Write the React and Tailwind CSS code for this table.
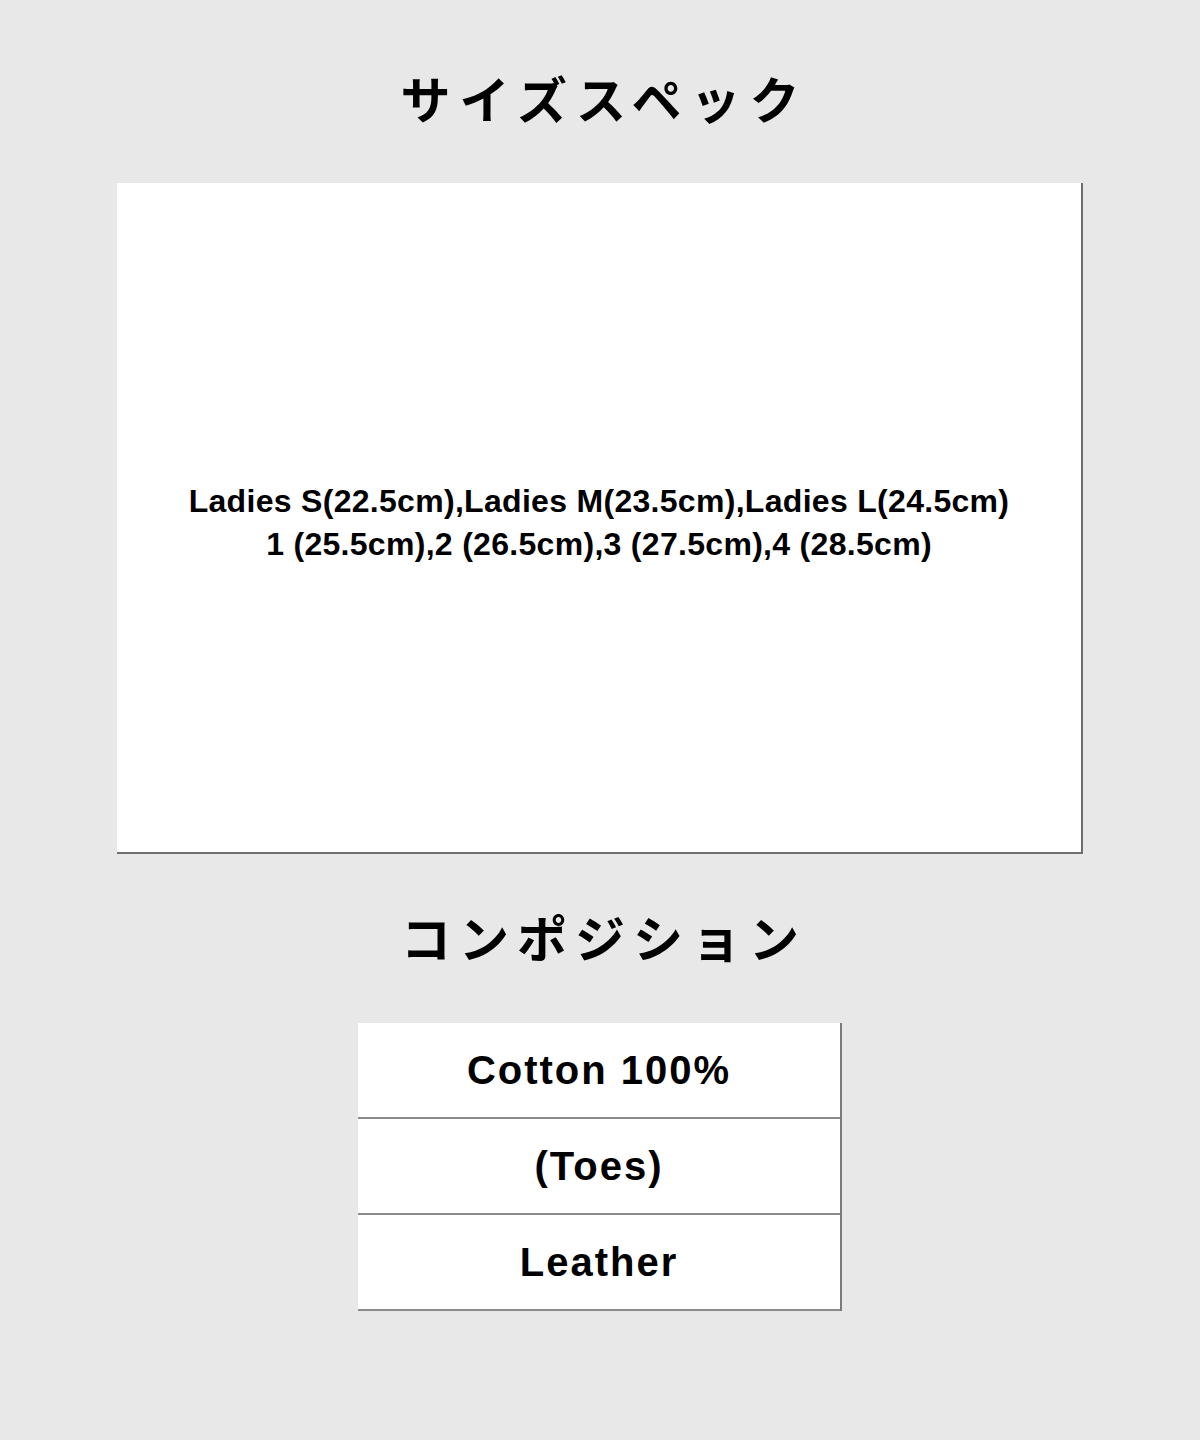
import React from 'react';

const jp = { fontFamily: '"Noto Sans CJK JP", "Noto Sans", sans-serif' };
const latin = { fontFamily: '"Liberation Sans", Arial, "Noto Sans CJK JP", sans-serif' };

const sizes = [
  'Ladies S(22.5cm),Ladies M(23.5cm),Ladies L(24.5cm)',
  '1 (25.5cm),2 (26.5cm),3 (27.5cm),4 (28.5cm)',
];

const materials = ['Cotton 100%', '(Toes)', 'Leather'];

const App = () => {
  return (
    <div className="min-h-[1440px] bg-[#e8e8e8] flex flex-col items-center text-black" style={jp}>
      <h2 className="mt-[71px] h-[52px] leading-[52px] text-[50px] font-bold tracking-[9px] pl-[9px]">
        サイズスペック
      </h2>

      <div className="mt-[60px] w-[966px] h-[671px] bg-white border-r-2 border-b-2 border-[#6e6e6e] flex flex-col items-center justify-center pt-[10px]">
        {sizes.map((line) => (
          <p key={line} className="text-[32px] leading-[43px] font-bold tracking-[0.3px]" style={latin}>
            {line}
          </p>
        ))}
      </div>

      <h2 className="mt-[56px] h-[52px] leading-[52px] text-[50px] font-bold tracking-[8px] pl-[8px]">
        コンポジション
      </h2>

      <div className="mt-[61px] w-[484px] bg-white border-r-2 border-[#7a7a7a]">
        {materials.map((m) => (
          <div
            key={m}
            className="h-[96px] flex items-center justify-center border-b-2 border-[#8c8c8c] text-[40px] font-bold tracking-[2px]"
            style={latin}
          >
            {m}
          </div>
        ))}
      </div>
    </div>
  );
};

export default App;
